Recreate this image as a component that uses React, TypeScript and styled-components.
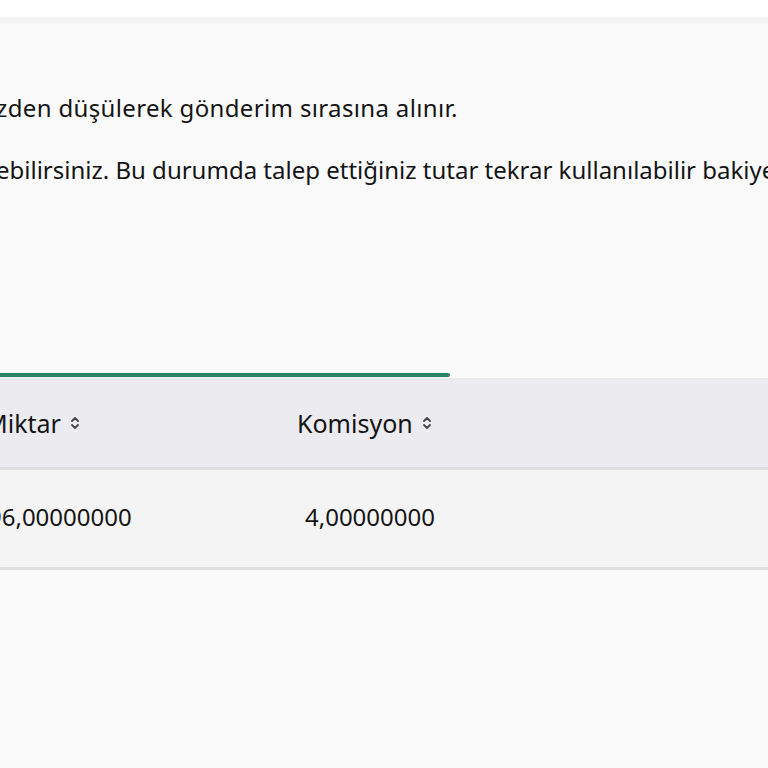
import React from "react";
import styled, { createGlobalStyle } from "styled-components";

const Global = createGlobalStyle`
  html, body { margin: 0; padding: 0; }
  body {
    width: 768px; height: 768px; overflow: hidden;
    background: #fafafa;
    font-family: "Noto Sans", "Open Sans", sans-serif;
    color: #141414;
  }
`;

const TopBar = styled.header`
  height: 17px;
  background: #ffffff;
  border-bottom: 6px solid #f3f3f3;
`;

const Content = styled.main`
  background: #fafafa;
  display: flex;
  flex-direction: column;
`;

const Notes = styled.section`
  padding-top: 70px;
  display: flex;
  flex-direction: column;
  gap: 32px;
  white-space: nowrap;
`;

const Note = styled.p<{ $shift: number; $spacing: number }>`
  margin: 0;
  font-size: 24px;
  letter-spacing: ${(p) => p.$spacing}px;
  line-height: 30px;
  margin-left: ${(p) => p.$shift}px;
`;

const Tabs = styled.div`
  margin-top: 187px;
  height: 6px;
  border-bottom: 2px solid #e9e9ec;
  display: flex;
`;

const ActiveTab = styled.div`
  width: 450px;
  height: 4px;
  margin-top: 1px;
  background: #2b8466;
  border-radius: 0 2px 2px 0;
`;

const Table = styled.div`
  display: flex;
  flex-direction: column;
`;

const HeadRow = styled.div`
  display: grid;
  grid-template-columns: 312px 1fr;
  height: 87px;
  align-items: center;
  background: #ebebf0;
  border-bottom: 3px solid #dedee0;
  margin-left: -15px;
`;

const BodyRow = styled.div`
  display: grid;
  grid-template-columns: 312px 1fr;
  height: 97px;
  align-items: center;
  background: #f4f4f4;
  border-bottom: 3px solid #dfdfdf;
  margin-left: -15px;
`;

const HeadCell = styled.div`
  display: flex;
  align-items: center;
  gap: 8px;
  font-size: 25px;
  font-weight: 400;
  padding-bottom: 2px;
`;

const Cell = styled.div<{ $pad: number }>`
  font-size: 24px;
  padding-left: ${(p) => p.$pad}px;
  padding-bottom: 4px;
`;

const SortIcon = () => (
  <svg width="12" height="16" viewBox="0 0 12 16" fill="none" stroke="#444" strokeWidth="1.8" strokeLinecap="round" strokeLinejoin="round">
    <path d="M3 6 L6 3 L9 6" />
    <path d="M3 10 L6 13 L9 10" />
  </svg>
);

export default function App() {
  return (
    <>
      <Global />
      <TopBar />
      <Content>
        <Notes>
          <Note $shift={-4} $spacing={0.35}>zden düşülerek gönderim sırasına alınır.</Note>
          <Note $shift={-4} $spacing={0}>ebilirsiniz. Bu durumda talep ettiğiniz tutar tekrar kullanılabilir bakiyenize</Note>
        </Notes>
        <Tabs>
          <ActiveTab />
        </Tabs>
        <Table>
          <HeadRow>
            <HeadCell>
              Miktar <SortIcon />
            </HeadCell>
            <HeadCell>
              Komisyon <SortIcon />
            </HeadCell>
          </HeadRow>
          <BodyRow>
            <Cell $pad={3}>96,00000000</Cell>
            <Cell $pad={8}>4,00000000</Cell>
          </BodyRow>
        </Table>
      </Content>
    </>
  );
}
